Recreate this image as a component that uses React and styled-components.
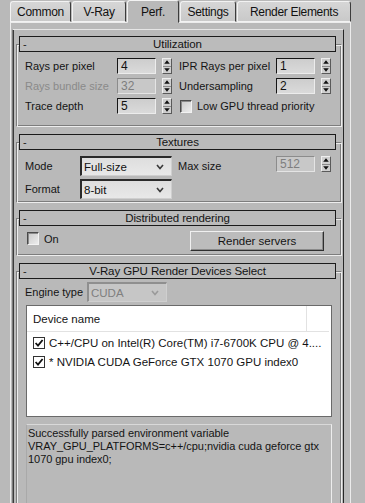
import React from 'react';
import styled, { createGlobalStyle } from 'styled-components';

const Global = createGlobalStyle`
  html, body { margin: 0; padding: 0; background: #b9b9b9; }
  body {
    font-family: "Liberation Sans", Arial, sans-serif;
    font-size: 11px;
    color: #141414;
  }
  * { box-sizing: border-box; }
`;

const Window = styled.div`
  width: 365px;
  height: 503px;
  overflow: hidden;
  background: #b9b9b9;
  padding-left: 10px;
  display: flex;
  flex-direction: column;
`;

const TabBar = styled.div`
  display: flex;
  align-items: flex-end;
  gap: 1px;
  height: 25px;
  position: relative;
  z-index: 2;
`;

const Tab = styled.div`
  width: ${p => p.$w}px;
  height: ${p => (p.$active ? 23 : 21)}px;
  margin-bottom: ${p => (p.$active ? -1 : 0)}px;
  background: ${p => (p.$active ? '#b9b9b9' : 'linear-gradient(#d6d6d6, #c9c9c9)')};
  border: 1px solid;
  border-color: #f2f2f2 #3c3c3c ${p => (p.$active ? '#b9b9b9' : '#f2f2f2')} #f2f2f2;
  border-radius: 3px 3px 0 0;
  display: flex;
  align-items: center;
  justify-content: center;
  font-size: 12px;
  letter-spacing: -0.3px;
  color: #111;
`;

const TabPage = styled.div`
  width: 341px;
  flex: 1;
  border-top: 1px solid #ececec;
  border-left: 1px solid #ececec;
  border-right: 1px solid #ececec;
  padding: 6px 6px 0 1px;
  display: flex;
  flex-direction: column;
`;

const ScrollFrame = styled.div`
  flex: 1;
  border-top: 1px solid #e6e6e6;
  border-left: 1px solid #7a7a7a;
  border-right: 1px solid #262626;
  box-shadow: inset 1px 0 0 #3a3a3a;
  padding: 0 1px 0 3px;
  display: flex;
  flex-direction: column;
`;

const RolloutBox = styled.section`
  margin-top: ${p => p.$mt}px;
  border: 1px solid;
  border-color: #7d7d7d #ededed #ededed #7d7d7d;
  box-shadow: inset 1px 1px 0 #ededed, inset -1px -1px 0 #7d7d7d;
  padding: 1px;
  display: flex;
  flex-direction: column;
`;

const RolloutHeader = styled.div`
  margin: -10px 4px 0 1px;
  height: 16px;
  border: 1px solid #1b1b1b;
  background: #bbbbbb;
  display: grid;
  grid-template-columns: 1fr auto 1fr;
  align-items: center;
  font-size: 11.5px;
`;

const Minus = styled.span`
  padding-left: 3px;
  font-size: 11px;
  line-height: 1;
  color: #222;
`;

const Title = styled.span`
  letter-spacing: -0.1px;
`;

const Rollout = ({ title, mt = 15, children }) => (
  <RolloutBox $mt={mt}>
    <RolloutHeader>
      <Minus>-</Minus>
      <Title>{title}</Title>
      <span />
    </RolloutHeader>
    {children}
  </RolloutBox>
);

const Grid = styled.div`
  display: grid;
  grid-template-columns: ${p => p.$cols};
  grid-auto-rows: ${p => p.$rowH}px;
  row-gap: ${p => p.$gap}px;
  align-items: ${p => p.$align || 'center'};
  padding: ${p => p.$pad};
`;

const Label = styled.span`
  color: ${p => (p.$disabled ? '#8a8a8a' : '#141414')};
  white-space: nowrap;
  align-self: center;
`;

const FieldRow = styled.div`
  display: flex;
  align-items: center;
  gap: 6px;
  align-self: ${p => p.$self || 'center'};
`;

const NumBox = styled.div`
  width: 40px;
  height: 16px;
  border: 1px solid;
  border-color: ${p => (p.$disabled ? '#8c8c8c #e4e4e4 #e4e4e4 #8c8c8c' : '#161616 #ececec #ececec #161616')};
  background: ${p => (p.$disabled ? '#c8c8c8' : 'linear-gradient(#cdcdcd, #dadada)')};
  color: ${p => (p.$disabled ? '#7e7e7e' : '#111')};
  padding-left: 3px;
  font-size: 12px;
  line-height: 14px;
`;

const SpinBox = styled.div`
  width: 10px;
  height: 16px;
  display: flex;
  flex-direction: column;
  border: 1px solid;
  border-color: #efefef #5a5a5a #5a5a5a #efefef;
  background: #cfcfcf;
`;

const SpinHalf = styled.div`
  flex: 1;
  display: flex;
  align-items: center;
  justify-content: center;
  & + & { border-top: 1px solid #8a8a8a; }
`;

const Spinner = () => (
  <SpinBox>
    <SpinHalf>
      <svg width="6" height="4" viewBox="0 0 6 4"><path d="M3 0.3 L5.8 3.7 L0.2 3.7 Z" fill="#111" /></svg>
    </SpinHalf>
    <SpinHalf>
      <svg width="6" height="4" viewBox="0 0 6 4"><path d="M0.2 0.3 L5.8 0.3 L3 3.7 Z" fill="#111" /></svg>
    </SpinHalf>
  </SpinBox>
);

const NumField = ({ value, disabled, self }) => (
  <FieldRow $self={self}>
    <NumBox $disabled={disabled}>{value}</NumBox>
    <Spinner />
  </FieldRow>
);

const CheckRow = styled.label`
  display: flex;
  align-items: center;
  gap: 5px;
  grid-column: ${p => p.$col || 'auto'};
  margin-left: ${p => p.$ml || 0}px;
  align-self: ${p => p.$self || 'center'};
`;

const Box3D = styled.span`
  width: 12px;
  height: 13px;
  border: 1px solid;
  border-color: #4a4a4a #f2f2f2 #f2f2f2 #4a4a4a;
  box-shadow: inset 1px 1px 0 #8a8a8a;
  background: linear-gradient(135deg, #c9c9c9, #ececec);
`;

const SelectBox = styled.div`
  width: ${p => p.$w}px;
  height: 20px;
  border-top: 2px solid ${p => (p.$disabled ? '#8f8f8f' : '#2a2a2a')};
  border-left: 2px solid ${p => (p.$disabled ? '#8f8f8f' : '#2a2a2a')};
  border-right: 1px solid #cfcfcf;
  border-bottom: 1px solid #cfcfcf;
  background: ${p => (p.$disabled ? '#c6c6c6' : 'linear-gradient(#dedede, #e8e8e8)')};
  color: ${p => (p.$disabled ? '#7f7f7f' : '#111')};
  display: flex;
  align-items: center;
  justify-content: space-between;
  padding: 1px 7px 0 2px;
  font-size: 11.5px;
  align-self: start;
`;

const Chevron = ({ color }) => (
  <svg width="8" height="6" viewBox="0 0 8 6">
    <path d="M1 1 L4 4.5 L7 1" fill="none" stroke={color} strokeWidth="1.6" />
  </svg>
);

const Select = ({ w, value, disabled }) => (
  <SelectBox $w={w} $disabled={disabled}>
    <span>{value}</span>
    <Chevron color={disabled ? '#9a9a9a' : '#3a3a3a'} />
  </SelectBox>
);

const DistRow = styled.div`
  display: flex;
  align-items: flex-start;
  justify-content: space-between;
  padding: 5px 16px 3px 9px;
`;

const OnCheck = styled.label`
  display: flex;
  align-items: center;
  gap: 5px;
  margin-top: 1px;
`;

const Button = styled.div`
  width: 134px;
  height: 20px;
  background: #bcbcbc;
  border: 1px solid;
  border-color: #f0f0f0 #2e2e2e #2e2e2e #f0f0f0;
  box-shadow: inset -1px -1px 0 #8a8a8a;
  display: flex;
  align-items: center;
  justify-content: center;
  font-size: 11.5px;
`;

const GpuBody = styled.div`
  display: flex;
  flex-direction: column;
  padding: 3px 8px 0 7px;
`;

const EngineRow = styled.div`
  display: flex;
  align-items: center;
`;

const EngineLabel = styled.span`
  width: 62px;
`;

const ListBox = styled.div`
  margin: 3px 0 0 1px;
  height: 112px;
  background: #fff;
  border: 1px solid #6a6a6a;
  display: flex;
  flex-direction: column;
`;

const ListHead = styled.div`
  height: 26px;
  display: grid;
  grid-template-columns: 280px 1fr;
  border-bottom: 1px solid #e2e2e2;
  margin-right: 2px;
`;

const HeadCell = styled.div`
  display: flex;
  align-items: center;
  padding-left: 6px;
  font-size: 11.5px;
  border-right: ${p => (p.$sep ? '1px solid #e2e2e2' : 'none')};
`;

const ListRow = styled.div`
  height: 19px;
  display: flex;
  align-items: center;
  gap: 4px;
  padding-left: 6px;
  font-size: 11.5px;
  white-space: nowrap;
`;

const ListRows = styled.div`
  padding-top: 1px;
`;

const CheckMark = () => (
  <svg width="12" height="12" viewBox="0 0 12 12">
    <rect x="0.5" y="0.5" width="11" height="11" fill="#fff" stroke="#333" />
    <path d="M2.6 6 L5 8.6 L9.6 3" fill="none" stroke="#111" strokeWidth="1.8" />
  </svg>
);

const InfoBox = styled.div`
  margin: 7px 0 0 1px;
  height: 100px;
  border-top: 1px solid #d9d9d9;
  border-left: 1px solid #a9a9a9;
  border-right: 1px solid #ededed;
  background: #b9b9b9;
  padding: 2px 0 0 1px;
  font-size: 11px;
  line-height: 13px;
  letter-spacing: -0.05px;
`;

export default function App() {
  return (
    <>
      <Global />
      <Window>
        <TabBar>
          <Tab $w={61}>Common</Tab>
          <Tab $w={54}>V-Ray</Tab>
          <Tab $w={52} $active>Perf.</Tab>
          <Tab $w={56}>Settings</Tab>
          <Tab $w={114}>Render Elements</Tab>
        </TabBar>
        <TabPage>
          <ScrollFrame>
            <Rollout title="Utilization" mt={14}>
              <Grid $cols="92px 55px 7px 97px 55px" $rowH={16} $gap={4} $pad="6px 0 11px 7px">
                <Label>Rays per pixel</Label>
                <NumField value="4" />
                <span />
                <Label>IPR Rays per pixel</Label>
                <NumField value="1" />

                <Label $disabled>Rays bundle size</Label>
                <NumField value="32" disabled />
                <span />
                <Label>Undersampling</Label>
                <NumField value="2" />

                <Label>Trace depth</Label>
                <NumField value="5" />
                <span />
                <CheckRow $col="4 / span 2" $ml={1}>
                  <Box3D />
                  <span>Low GPU thread priority</span>
                </CheckRow>
              </Grid>
            </Rollout>

            <Rollout title="Textures">
              <Grid $cols="55px 92px 6px 98px 55px" $rowH={20} $gap={3} $pad="6px 0 2px 7px">
                <Label>Mode</Label>
                <Select w={92} value="Full-size" />
                <span />
                <Label>Max size</Label>
                <NumField value="512" disabled self="start" />

                <Label>Format</Label>
                <Select w={92} value="8-bit" />
              </Grid>
            </Rollout>

            <Rollout title="Distributed rendering">
              <DistRow>
                <OnCheck>
                  <Box3D />
                  <span>On</span>
                </OnCheck>
                <Button>Render servers</Button>
              </DistRow>
            </Rollout>

            <Rollout title="V-Ray GPU Render Devices Select">
              <GpuBody>
                <EngineRow>
                  <EngineLabel>Engine type</EngineLabel>
                  <Select w={80} value="CUDA" disabled />
                </EngineRow>
                <ListBox>
                  <ListHead>
                    <HeadCell $sep>Device name</HeadCell>
                    <HeadCell />
                  </ListHead>
                  <ListRows>
                    <ListRow>
                      <CheckMark />
                      <span>C++/CPU on Intel(R) Core(TM) i7-6700K CPU @ 4....</span>
                    </ListRow>
                    <ListRow>
                      <CheckMark />
                      <span>* NVIDIA CUDA GeForce GTX 1070 GPU index0</span>
                    </ListRow>
                  </ListRows>
                </ListBox>
                <InfoBox>
                  Successfully parsed environment variable<br />
                  VRAY_GPU_PLATFORMS=c++/cpu;nvidia cuda geforce gtx<br />
                  1070 gpu index0;
                </InfoBox>
              </GpuBody>
            </Rollout>
          </ScrollFrame>
        </TabPage>
      </Window>
    </>
  );
}
